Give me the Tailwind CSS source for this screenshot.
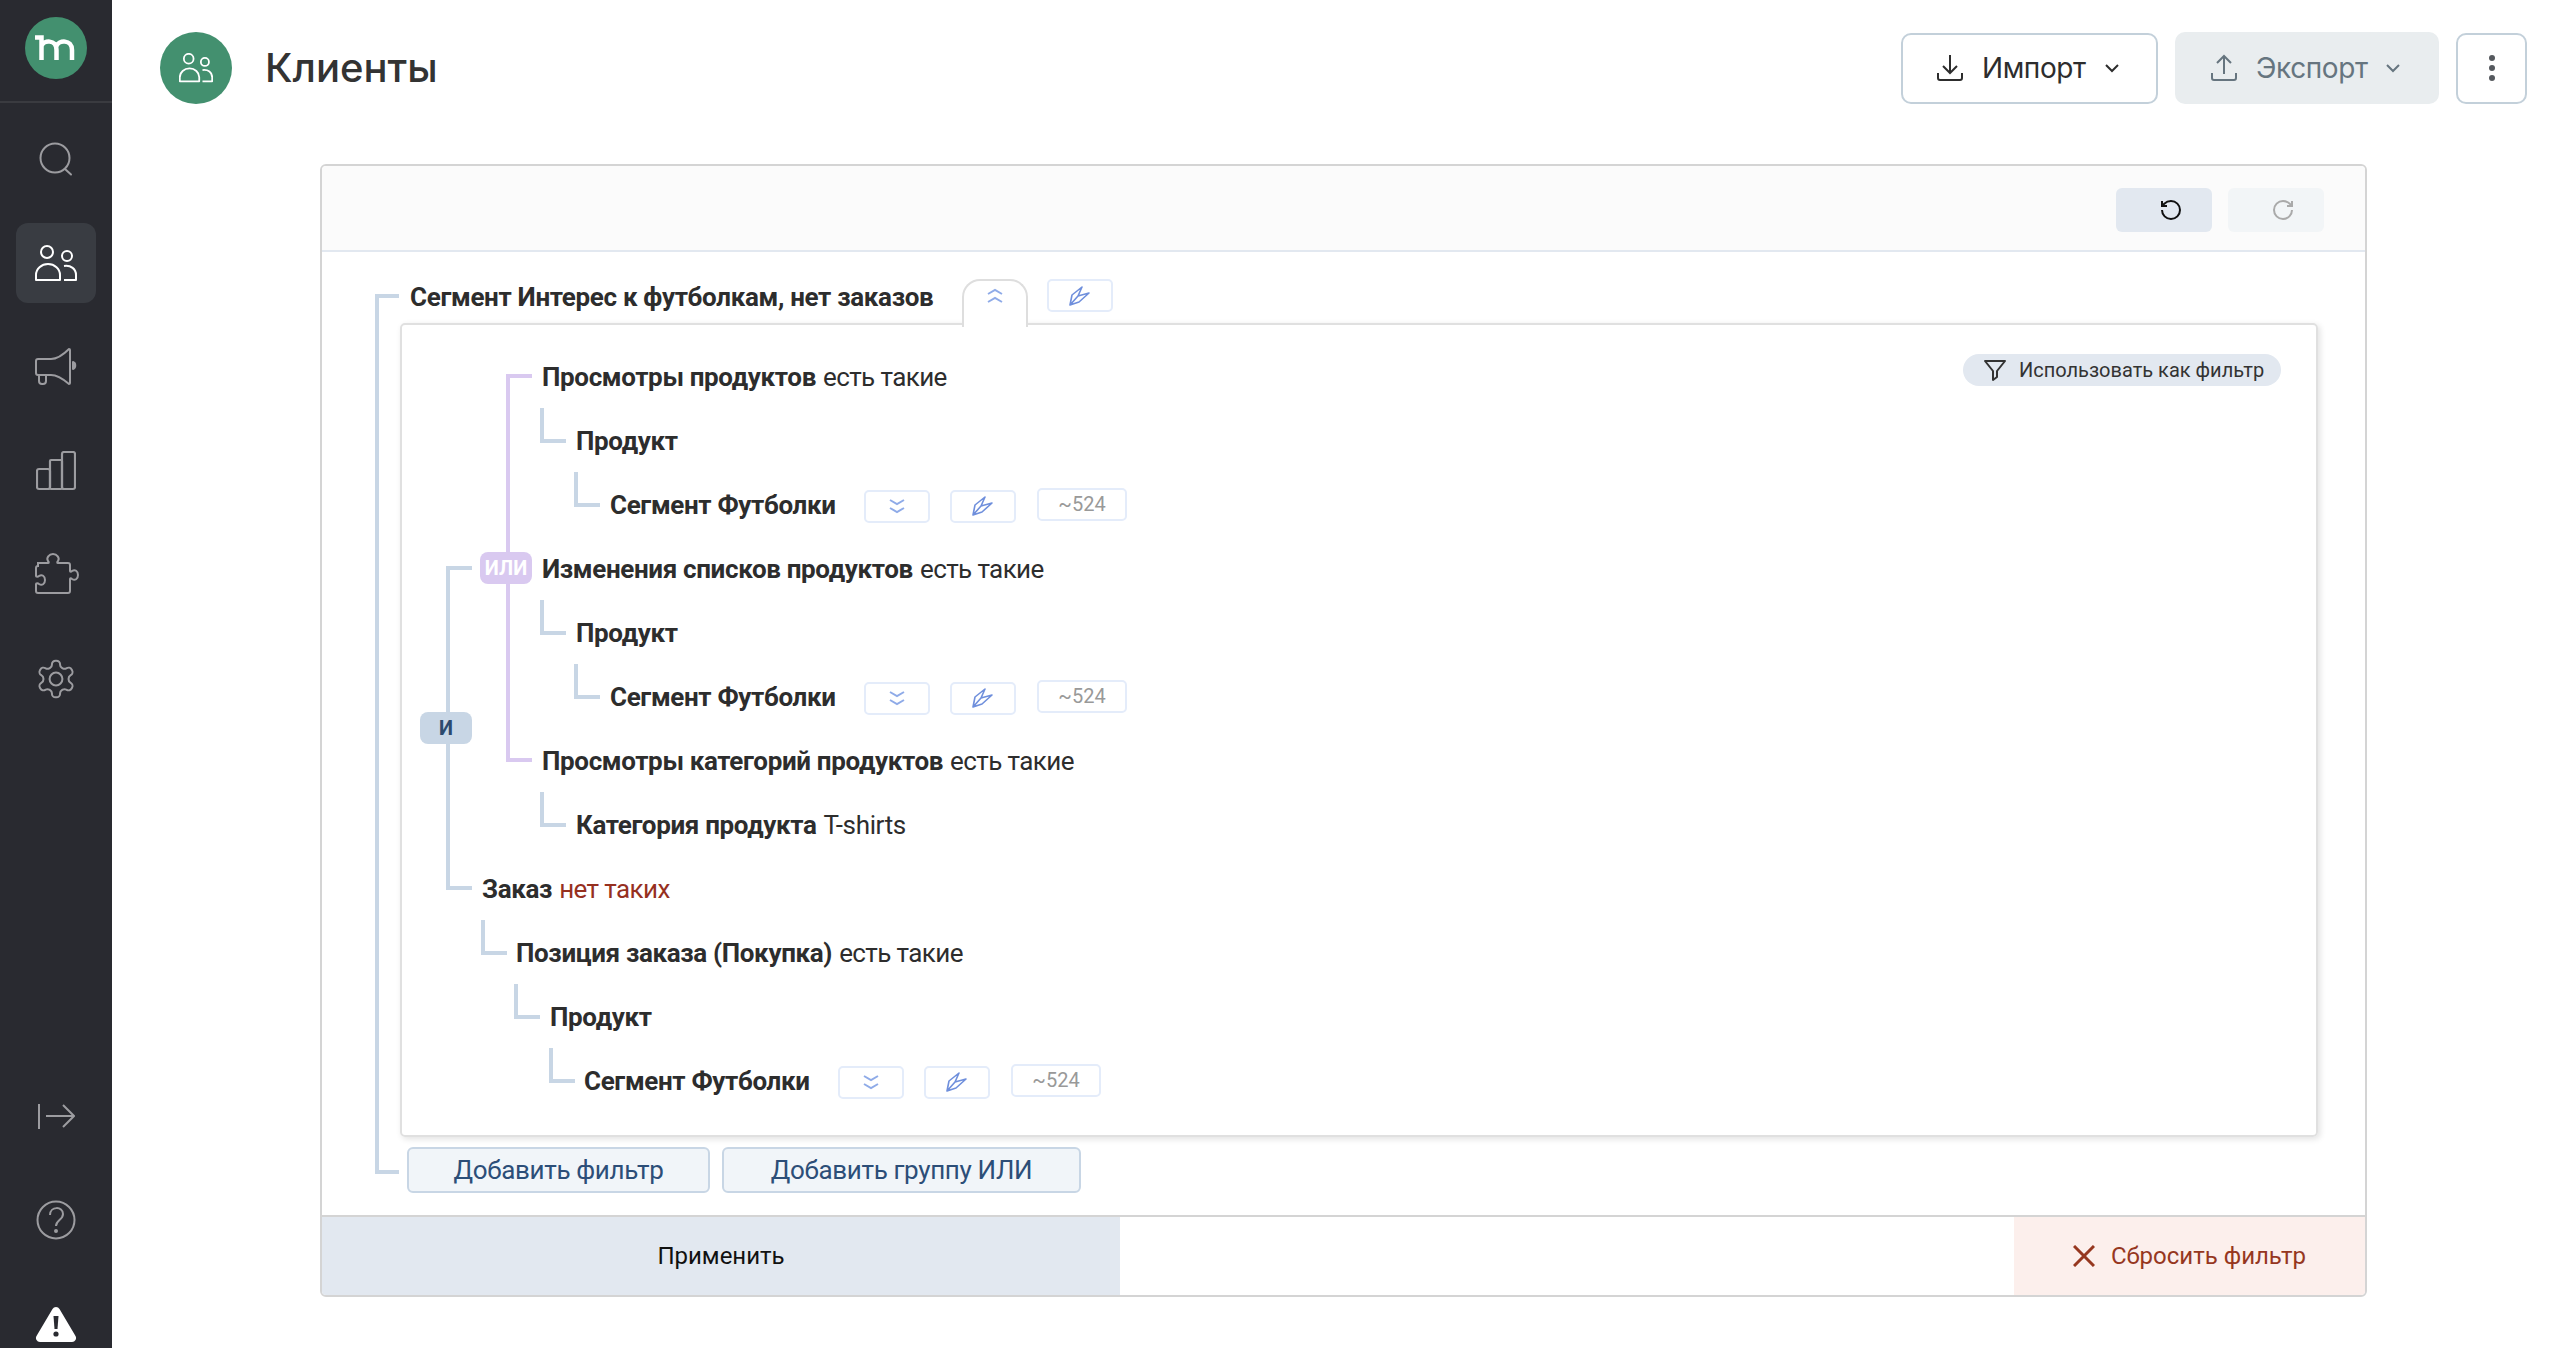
<!DOCTYPE html>
<html lang="ru">
<head>
  <meta charset="UTF-8">
  <title>Клиенты</title>
  <script src="https://cdn.jsdelivr.net/npm/@tailwindcss/browser@4"></script>
</head>
<body class="bg-white overflow-hidden [font-family:Roboto,sans-serif] text-[#2d2d2d]">
<div class="flex w-[2576px] h-[1348px] overflow-hidden">

  <!-- Sidebar -->
  <aside class="w-[112px] shrink-0 bg-[#292a30] flex flex-col">
    <div class="h-[103px] shrink-0 border-b-2 border-[#3a3b40] pt-[17px] pl-[25px]">
      <svg width="62" height="62" viewBox="0 0 62 62"><circle cx="31" cy="31" r="31" fill="#43906f"/><path d="M10 20.500h6.500V43M16.500 29c2-6 15-7 15 4v10M31.500 29c2-6 15.500-7 15.500 4v10" fill="none" stroke="#fff" stroke-width="4.500"/></svg>
    </div>
    <nav class="flex flex-col items-center gap-[24px] pt-[16px]">
      <div class="w-[80px] h-[80px] flex items-center justify-center">
        <svg width="34" height="34" viewBox="0 0 34 34" fill="none" stroke="#9c9ca0" stroke-width="2"><circle cx="16" cy="16" r="14.500"/><path d="M26 27l6 5.500" stroke-linecap="round"/></svg>
      </div>
      <div class="w-[80px] h-[80px] flex items-center justify-center rounded-[12px] bg-[#393c42]">
        <svg width="42" height="37" viewBox="0 0 42 37" fill="none" stroke="#fff" stroke-width="2"><circle cx="12" cy="7" r="6"/><circle cx="32" cy="11" r="5"/><path d="M1 35v-5a12 11 0 0 1 24 0v5z" stroke-linejoin="round"/><path d="M29 21c7-1 12 3 12 9v5H29" stroke-linejoin="round"/></svg>
      </div>
      <div class="w-[80px] h-[80px] flex items-center justify-center">
        <svg width="42" height="40" viewBox="0 0 42 40" fill="none" stroke="#9c9ca0" stroke-width="2" stroke-linejoin="round"><path d="M1 14a2 2 0 0 1 2-2h13c5 0 11-3 18-10a1 1 0 0 1 1 1v33a1 1 0 0 1-1 1c-7-6-13-9-18-9H3a2 2 0 0 1-2-2z"/><path d="M4 28v6a3 3 0 0 0 3 3h1a3 3 0 0 0 3-3v-6"/><path d="M38 15c3 1 3 6 0 7z" fill="#9c9ca0"/></svg>
      </div>
      <div class="w-[80px] h-[80px] flex items-center justify-center">
        <svg width="40" height="40" viewBox="0 0 40 40" fill="none" stroke="#9c9ca0" stroke-width="2.200"><rect x="1" y="18" width="13" height="20" rx="2"/><rect x="14" y="9" width="12" height="29" rx="1"/><rect x="26" y="1" width="13" height="37" rx="2"/></svg>
      </div>
      <div class="w-[80px] h-[80px] flex items-center justify-center">
        <svg width="44" height="44" viewBox="0 0 44 44" fill="none" stroke="#9c9ca0" stroke-width="2" class="ml-[2px]"><path d="M3 10h10c1 0 1-1 0-2-2-3 1-7 5-7s7 4 5 7c-1 1-1 2 0 2h10a2 2 0 0 1 2 2v6c0 1 1 1 2 0 3-2 6 0 6 4s-3 6-6 4c-1-1-2-1-2 0v12a2 2 0 0 1-2 2H3a2 2 0 0 1-2-2v-7c0-1 2-1 3 0 3 2 6 0 6-4s-3-6-6-4c-1 1-3 1-3 0v-8a2 2 0 0 1 2-2z"/></svg>
      </div>
      <div class="w-[80px] h-[80px] flex items-center justify-center">
        <svg width="44" height="44" viewBox="0 0 24 24" fill="none" stroke="#9c9ca0" stroke-width="1.100"><path d="M12.220 2h-.44a2 2 0 0 0-2 2v.18a2 2 0 0 1-1 1.730l-.43.25a2 2 0 0 1-2 0l-.15-.08a2 2 0 0 0-2.730.73l-.22.38a2 2 0 0 0 .73 2.730l.15.1a2 2 0 0 1 1 1.720v.51a2 2 0 0 1-1 1.740l-.15.09a2 2 0 0 0-.73 2.730l.22.38a2 2 0 0 0 2.730.73l.15-.08a2 2 0 0 1 2 0l.43.25a2 2 0 0 1 1 1.730V20a2 2 0 0 0 2 2h.44a2 2 0 0 0 2-2v-.18a2 2 0 0 1 1-1.730l.43-.25a2 2 0 0 1 2 0l.15.08a2 2 0 0 0 2.730-.73l.22-.39a2 2 0 0 0-.73-2.730l-.15-.08a2 2 0 0 1-1-1.740v-.5a2 2 0 0 1 1-1.740l.15-.09a2 2 0 0 0 .73-2.730l-.22-.38a2 2 0 0 0-2.730-.73l-.15.08a2 2 0 0 1-2 0l-.43-.25a2 2 0 0 1-1-1.730V4a2 2 0 0 0-2-2z"/><circle cx="12" cy="12" r="3.500"/></svg>
      </div>
    </nav>
    <div class="mt-auto mb-[-16px] flex flex-col items-center gap-[24px]">
      <div class="w-[80px] h-[80px] flex items-center justify-center">
        <svg width="38" height="26" viewBox="0 0 38 26" fill="none" stroke="#9c9ca0" stroke-width="2"><path d="M2 1v25"/><path d="M9 13h28M26 2l11 11-11 11"/></svg>
      </div>
      <div class="w-[80px] h-[80px] flex items-center justify-center">
        <svg width="40" height="40" viewBox="0 0 40 40" fill="none" stroke="#9c9ca0" stroke-width="2"><circle cx="20" cy="20" r="18.500"/><path d="M14 15c0-9 13-9 13-1 0 6-7 6-7 12"/><circle cx="20" cy="31" r="1" fill="#9c9ca0"/></svg>
      </div>
      <div class="w-[80px] h-[80px] flex items-center justify-center">
        <svg width="42" height="36" viewBox="0 0 42 36" fill="#fff"><path d="M17.500 3a4 4 0 0 1 7 0l16 27a4 4 0 0 1-3.500 6H5a4 4 0 0 1-3.500-6z"/><path d="M18.500 10h5l-1 13h-3z" fill="#292a30"/><circle cx="21" cy="28" r="2.600" fill="#292a30"/></svg>
      </div>
    </div>
  </aside>

  <!-- Main -->
  <main class="flex-1 min-w-0">
    <header class="flex items-center h-[72px] mt-[32px] pl-[48px] pr-[49px]">
      <div class="w-[72px] h-[72px] rounded-full bg-[#43906f] flex items-center justify-center">
        <svg width="34" height="30" viewBox="0 0 42 37" fill="none" stroke="#fff" stroke-width="2.200"><circle cx="12" cy="7" r="6"/><circle cx="32" cy="11" r="5"/><path d="M1 35v-5a12 11 0 0 1 24 0v5z" stroke-linejoin="round"/><path d="M29 21c7-1 12 3 12 9v5H29" stroke-linejoin="round"/></svg>
      </div>
      <h1 class="ml-[33px] text-[40px] leading-[48px] font-medium [font-family:Inter,sans-serif] text-[#333]">Клиенты</h1>
      <div class="ml-auto flex items-center gap-[17px] [font-family:Inter,sans-serif] text-[28px] tracking-[-0.400px]">
        <button class="w-[257px] h-[71px] flex items-center pl-[33px] rounded-[10px] border-2 border-[#c3d0da] text-[#2d2d2d]">
          <svg width="28" height="28" viewBox="0 0 28 28" fill="none" stroke="currentColor" stroke-width="2"><path d="M14 1v18M7 12l7 7 7-7M2 19v5a2 2 0 0 0 2 2h20a2 2 0 0 0 2-2v-5"/></svg>
          <span class="ml-[18px]">Импорт</span>
          <svg width="14" height="9" viewBox="0 0 14 9" fill="none" stroke="currentColor" stroke-width="2" class="ml-[19px]"><path d="M1 1l6 6 6-6"/></svg>
        </button>
        <button class="w-[264px] h-[72px] flex items-center pl-[35px] rounded-[10px] bg-[#e9edef] text-[#66757f]">
          <svg width="28" height="28" viewBox="0 0 28 28" fill="none" stroke="currentColor" stroke-width="2"><path d="M14 20V2M7 9l7-7 7 7M2 19v5a2 2 0 0 0 2 2h20a2 2 0 0 0 2-2v-5"/></svg>
          <span class="ml-[18px]">Экспорт</span>
          <svg width="14" height="9" viewBox="0 0 14 9" fill="none" stroke="currentColor" stroke-width="2" class="ml-[18px]"><path d="M1 1l6 6 6-6"/></svg>
        </button>
        <button class="w-[71px] h-[71px] flex flex-col items-center justify-center gap-[4px] rounded-[10px] border-2 border-[#c3d0da]">
          <span class="w-[6px] h-[6px] rounded-full bg-[#55595e]"></span>
          <span class="w-[6px] h-[6px] rounded-full bg-[#55595e]"></span>
          <span class="w-[6px] h-[6px] rounded-full bg-[#55595e]"></span>
        </button>
      </div>
    </header>

    <!-- Card -->
    <section class="mt-[60px] ml-[208px] w-[2047px] h-[1133px] rounded-[6px] border-2 border-[#d4d4d4] overflow-hidden flex flex-col">
      <div class="h-[86px] shrink-0 bg-[#fbfbfb] border-b-2 border-[#e2e8f0] flex justify-end gap-[16px] pt-[22px] pr-[41px]">
        <button class="w-[96px] h-[44px] rounded-[6px] bg-[#e2e8f0] flex items-center justify-center pl-[14px]">
          <svg width="24" height="24" viewBox="0 0 24 24" fill="none" stroke="#111" stroke-width="2"><path d="M3 12a9 9 0 1 0 9-9 9.750 9.750 0 0 0-6.740 2.740L3 8"/><path d="M3 3v5h5"/></svg>
        </button>
        <button class="w-[96px] h-[44px] rounded-[6px] bg-[#f2f5f7] flex items-center justify-center pl-[14px]">
          <svg width="24" height="24" viewBox="0 0 24 24" fill="none" stroke="#aaa" stroke-width="2"><path d="M21 12a9 9 0 1 1-9-9c2.520 0 4.930 1 6.740 2.740L21 8"/><path d="M21 3v5h-5"/></svg>
        </button>
      </div>

      <div class="relative flex-1 pt-[27px] pl-[78px] pr-[47px]">
        <!-- outer bracket -->
        <div class="absolute left-[53px] top-[42px] w-[24px] h-[880px] border-l-4 border-t-4 border-b-4 border-[#c8d6e5]"></div>

        <div class="flex items-start h-[44px] pl-[10px]">
          <span class="w-[552px] shrink-0 text-[26px] leading-[36px] font-bold tracking-[-0.330px]">Сегмент Интерес к футболкам, нет заказов</span>
          <div class="relative z-10 w-[66px] h-[48px] bg-white border-x-2 border-t-2 border-[#dedede] rounded-t-[18px] flex justify-center pt-[7px]">
            <svg width="16" height="16" viewBox="0 0 16 16" fill="none" stroke="#8fabe8" stroke-width="2"><path d="M1 6l7-4 7 4M1 14l7-4 7 4"/></svg>
          </div>
          <div class="ml-[19px] w-[66px] h-[33px] rounded-[5px] border-2 border-[#e4ecfa] flex items-center justify-center">
            <svg width="22" height="20" viewBox="0 0 22 20" fill="none" stroke="#6f8fdc" stroke-width="1.600" stroke-linejoin="round"><path d="M1 19L3 9l10-8-4 9 11-3-10 9zM1 19l8-9"/></svg>
          </div>
        </div>

        <!-- Filter box -->
        <div class="relative w-[1918px] h-[814px] rounded-[5px] border-2 border-[#e0e0e0] shadow-[2px_2px_6px_rgba(0,0,0,0.12)] pt-[21px] pl-[80px] text-[26px]">
          <button class="absolute right-[35px] top-[29px] w-[318px] h-[32px] rounded-full bg-[#e2e8f0] flex items-center pl-[20px] text-[20px] text-[#333]">
            <svg width="24" height="24" viewBox="0 0 24 24" fill="none" stroke="#333" stroke-width="2" stroke-linejoin="round"><path d="M2 3h20l-8 10v6l-4 3v-9z"/></svg>
            <span class="ml-[12px]">Использовать как фильтр</span>
          </button>

          <!-- AND group -->
          <div class="relative">
            <div class="absolute left-[-36px] top-[220px] w-[26px] h-[324px] border-l-4 border-t-4 border-b-4 border-[#c8d6e5]"></div>
            <div class="absolute left-[-62px] top-[366px] z-10 w-[52px] h-[32px] rounded-[8px] bg-[#c8d6e5] text-[#2c4a6e] font-bold text-[20px] flex items-center justify-center">И</div>

            <!-- OR group -->
            <div class="relative pl-[60px]">
              <div class="absolute left-[24px] top-[28px] w-[26px] h-[388px] border-l-4 border-t-4 border-b-4 border-[#d9c9f0]"></div>
              <div class="absolute left-[-2px] top-[206px] z-10 w-[52px] h-[32px] rounded-[8px] bg-[#d9c9f0] text-white font-bold text-[20px] flex items-center justify-center">ИЛИ</div>

              <div class="h-[64px] flex items-center pb-[2px] tracking-[-0.350px]"><b>Просмотры продуктов</b><span class="ml-[7px] tracking-[-0.600px]">есть такие</span></div>
              <div class="relative h-[64px] ml-[34px] flex items-center pb-[2px] tracking-[-0.350px]">
                <i class="absolute left-[-36px] top-[-2px] w-[26px] h-[35px] border-l-4 border-b-4 border-[#c8d6e5]"></i><b>Продукт</b>
              </div>
              <div class="relative h-[64px] ml-[68px] flex items-center">
                <i class="absolute left-[-36px] top-[-2px] w-[26px] h-[35px] border-l-4 border-b-4 border-[#c8d6e5]"></i>
                <b class="w-[254px] shrink-0 pb-[2px] tracking-[-0.350px]">Сегмент Футболки</b>
                <span class="w-[66px] h-[33px] rounded-[5px] border-2 border-[#e4ecfa] flex items-center justify-center"><svg width="16" height="16" viewBox="0 0 16 16" fill="none" stroke="#8fabe8" stroke-width="2"><path d="M1 2l7 4 7-4M1 10l7 4 7-4"/></svg></span>
                <span class="ml-[20px] w-[66px] h-[33px] rounded-[5px] border-2 border-[#e4ecfa] flex items-center justify-center"><svg width="22" height="20" viewBox="0 0 22 20" fill="none" stroke="#6f8fdc" stroke-width="1.600" stroke-linejoin="round"><path d="M1 19L3 9l10-8-4 9 11-3-10 9zM1 19l8-9"/></svg></span>
                <span class="ml-[21px] mt-[-4px] w-[90px] h-[33px] rounded-[5px] border-2 border-[#e4ecfa] flex items-center justify-center text-[20px] text-[#999]">~524</span>
              </div>

              <div class="h-[64px] flex items-center pb-[2px] tracking-[-0.350px]"><b>Изменения списков продуктов</b><span class="ml-[7px] tracking-[-0.600px]">есть такие</span></div>
              <div class="relative h-[64px] ml-[34px] flex items-center pb-[2px] tracking-[-0.350px]">
                <i class="absolute left-[-36px] top-[-2px] w-[26px] h-[35px] border-l-4 border-b-4 border-[#c8d6e5]"></i><b>Продукт</b>
              </div>
              <div class="relative h-[64px] ml-[68px] flex items-center">
                <i class="absolute left-[-36px] top-[-2px] w-[26px] h-[35px] border-l-4 border-b-4 border-[#c8d6e5]"></i>
                <b class="w-[254px] shrink-0 pb-[2px] tracking-[-0.350px]">Сегмент Футболки</b>
                <span class="w-[66px] h-[33px] rounded-[5px] border-2 border-[#e4ecfa] flex items-center justify-center"><svg width="16" height="16" viewBox="0 0 16 16" fill="none" stroke="#8fabe8" stroke-width="2"><path d="M1 2l7 4 7-4M1 10l7 4 7-4"/></svg></span>
                <span class="ml-[20px] w-[66px] h-[33px] rounded-[5px] border-2 border-[#e4ecfa] flex items-center justify-center"><svg width="22" height="20" viewBox="0 0 22 20" fill="none" stroke="#6f8fdc" stroke-width="1.600" stroke-linejoin="round"><path d="M1 19L3 9l10-8-4 9 11-3-10 9zM1 19l8-9"/></svg></span>
                <span class="ml-[21px] mt-[-4px] w-[90px] h-[33px] rounded-[5px] border-2 border-[#e4ecfa] flex items-center justify-center text-[20px] text-[#999]">~524</span>
              </div>

              <div class="h-[64px] flex items-center pb-[2px] tracking-[-0.350px]"><b>Просмотры категорий продуктов</b><span class="ml-[7px] tracking-[-0.600px]">есть такие</span></div>
              <div class="relative h-[64px] ml-[34px] flex items-center pb-[2px] tracking-[-0.350px]">
                <i class="absolute left-[-36px] top-[-2px] w-[26px] h-[35px] border-l-4 border-b-4 border-[#c8d6e5]"></i><b>Категория продукта</b><span class="ml-[7px]">T-shirts</span>
              </div>
            </div>

            <!-- Order -->
            <div class="h-[64px] flex items-center pb-[2px] tracking-[-0.350px]"><b>Заказ</b><span class="ml-[7px] text-[#96301f] tracking-[-0.600px]">нет таких</span></div>
            <div class="relative h-[64px] ml-[34px] flex items-center pb-[2px] tracking-[-0.350px]">
              <i class="absolute left-[-35px] top-[-2px] w-[26px] h-[35px] border-l-4 border-b-4 border-[#c8d6e5]"></i><b>Позиция заказа (Покупка)</b><span class="ml-[7px] tracking-[-0.600px]">есть такие</span>
            </div>
            <div class="relative h-[64px] ml-[68px] flex items-center pb-[2px] tracking-[-0.350px]">
              <i class="absolute left-[-36px] top-[-2px] w-[26px] h-[35px] border-l-4 border-b-4 border-[#c8d6e5]"></i><b>Продукт</b>
            </div>
            <div class="relative h-[64px] ml-[102px] flex items-center">
              <i class="absolute left-[-35px] top-[-2px] w-[26px] h-[35px] border-l-4 border-b-4 border-[#c8d6e5]"></i>
              <b class="w-[254px] shrink-0 pb-[2px] tracking-[-0.350px]">Сегмент Футболки</b>
              <span class="w-[66px] h-[33px] rounded-[5px] border-2 border-[#e4ecfa] flex items-center justify-center"><svg width="16" height="16" viewBox="0 0 16 16" fill="none" stroke="#8fabe8" stroke-width="2"><path d="M1 2l7 4 7-4M1 10l7 4 7-4"/></svg></span>
              <span class="ml-[20px] w-[66px] h-[33px] rounded-[5px] border-2 border-[#e4ecfa] flex items-center justify-center"><svg width="22" height="20" viewBox="0 0 22 20" fill="none" stroke="#6f8fdc" stroke-width="1.600" stroke-linejoin="round"><path d="M1 19L3 9l10-8-4 9 11-3-10 9zM1 19l8-9"/></svg></span>
              <span class="ml-[21px] mt-[-4px] w-[90px] h-[33px] rounded-[5px] border-2 border-[#e4ecfa] flex items-center justify-center text-[20px] text-[#999]">~524</span>
            </div>
          </div>
        </div>

        <div class="flex gap-[12px] mt-[10px] ml-[7px] text-[26px] tracking-[-0.350px] text-[#2c4e78]">
          <button class="w-[303px] h-[46px] rounded-[6px] bg-[#f1f5f9] border-2 border-[#c8d6e5]">Добавить фильтр</button>
          <button class="w-[359px] h-[46px] rounded-[6px] bg-[#f1f5f9] border-2 border-[#c8d6e5]">Добавить группу ИЛИ</button>
        </div>
      </div>

      <!-- Footer -->
      <div class="h-[80px] shrink-0 border-t-2 border-[#d4d4d4] flex justify-between text-[24px]">
        <button class="w-[798px] bg-[#e2e8f0] text-[#111]">Применить</button>
        <button class="w-[351px] bg-[#fcefec] text-[#96371f] flex items-center justify-center gap-[16px]">
          <svg width="22" height="22" viewBox="0 0 22 22" fill="none" stroke="currentColor" stroke-width="3"><path d="M1 1l20 20M21 1L1 21"/></svg>
          Сбросить фильтр
        </button>
      </div>
    </section>
  </main>
</div>
</body>
</html>
